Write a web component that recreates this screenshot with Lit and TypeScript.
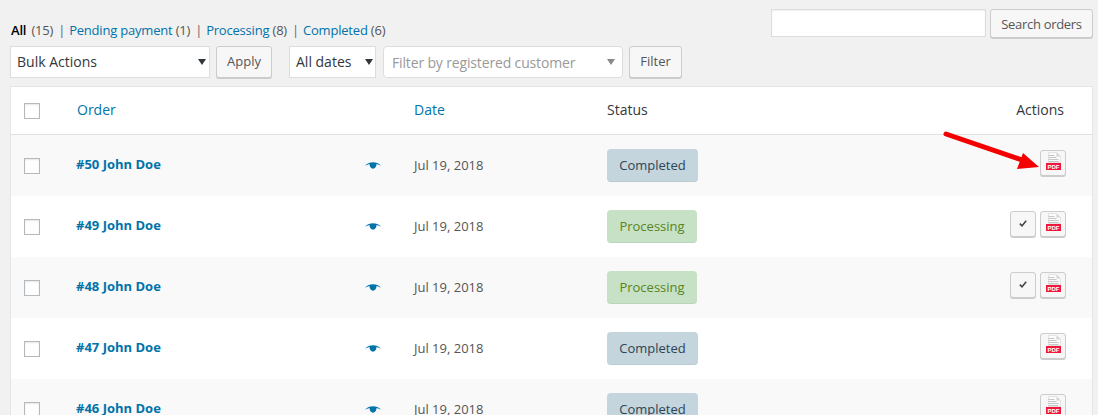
import { LitElement, html, css, svg } from "lit";
import { customElement } from "lit/decorators.js";

type Order = { id: number; status: "Completed" | "Processing" };

const ORDERS: Order[] = [
  { id: 50, status: "Completed" },
  { id: 49, status: "Processing" },
  { id: 48, status: "Processing" },
  { id: 47, status: "Completed" },
  { id: 46, status: "Completed" },
];

const caret = svg`<svg class="caret" width="8" height="6" viewBox="0 0 8 6"><path d="M0 0h8L4 6z" fill="currentColor"/></svg>`;

const eye = html`<svg class="eye" width="16" height="8" viewBox="0 0 16 8">
  <path d="M0 3.8C2.5 1.2 5 .3 8 .3s5.500.9 8 3.500C14.500 3 13 2.400 11.500 2.100 11.600 4.600 10 6.800 8 6.800S4.400 4.600 4.500 2.100C3 2.400 1.500 3 0 3.800z" fill="#0073aa"/>
</svg>`;

const pdf = html`<svg width="20" height="22" viewBox="0 0 20 22">
  <path d="M5.500 .5h8l4 4v6h-12z" fill="#fbfbfb" stroke="#e2e2e2"/>
  <path d="M13.500 .5v4h4z" fill="#d4d4d4"/>
  <path d="M5.500 3.500h6M5.500 5.500h8M5.500 7.500h10M5.500 9.500h10" stroke="#c6c6c6" fill="none"/>
  <rect x="3" y="11" width="15" height="7" fill="#f0163e"/>
  <text x="10.500" y="16.700" text-anchor="middle" class="pdf-text">PDF</text>
</svg>`;

const check = html`<svg width="8" height="7" viewBox="0 0 8 7">
  <path d="M.8 3.600 3 5.800 7.200 .8" fill="none" stroke="#3c434a" stroke-width="1.500"/>
</svg>`;

@customElement("app-root")
export class AppRoot extends LitElement {
  static styles = css`
    :host {
      display: block;
      position: relative;
      height: 415px;
      overflow: hidden;
      background: #f1f1f1;
      color: #555;
      font-family: "Open Sans", sans-serif;
      font-size: 13px;
    }

    a {
      color: #0073aa;
      text-decoration: none;
    }

    .wrap {
      display: flex;
      flex-direction: column;
      padding: 9px 5px 0 10px;
    }

    .search {
      display: flex;
      justify-content: flex-end;
      gap: 4px;
      height: 29px;
    }

    .search-input {
      width: 215px;
      height: 28px;
      box-sizing: border-box;
      background: #fff;
      border: 1px solid #ddd;
      box-shadow: inset 0 1px 2px rgba(0, 0, 0, 0.07);
    }

    .btn {
      box-sizing: border-box;
      display: flex;
      align-items: center;
      justify-content: center;
      height: 32px;
      padding-bottom: 2px;
      background: #f7f7f7;
      border: 1px solid #ccc;
      border-radius: 3px;
      box-shadow: 0 1px 0 #ccc;
      font-size: 13px;
      color: #555;
    }

    .btn.search-btn {
      width: 103px;
      height: 29px;
      padding-bottom: 0;
      letter-spacing: -0.3px;
    }

    .tabs {
      display: flex;
      align-items: center;
      height: 18px;
      margin-top: -17px;
      margin-left: 1px;
      white-space: pre;
      color: #555;
      letter-spacing: -0.2px;
    }

    .tabs b {
      color: #000;
      font-weight: 600;
      margin-right: 2px;
    }

    .tabs .sep {
      color: #666;
      margin: 0 4px 0 5px;
    }

    .filters {
      display: flex;
      align-items: flex-start;
      height: 41px;
      margin-top: 7px;
    }

    .select {
      box-sizing: border-box;
      display: flex;
      align-items: center;
      justify-content: space-between;
      height: 32px;
      background: #fff;
      border: 1px solid #ddd;
      color: #32373c;
      font-size: 14px;
      padding: 0 3px 2px 6px;
    }

    .caret {
      margin-top: 2px;
    }

    .select.bulk {
      width: 200px;
    }

    .select.dates {
      width: 87px;
      margin-left: 17px;
      padding-right: 2px;
    }

    .select.customer {
      width: 240px;
      margin-left: 7px;
      border-radius: 4px;
      color: #999;
      padding: 0 7px 0 8px;
      letter-spacing: -0.15px;
    }

    .select.customer .caret {
      color: #888;
      margin-top: 0;
    }

    .btn.apply {
      width: 56px;
      margin-left: 6px;
    }

    .btn.filter {
      width: 53px;
      margin-left: 6px;
    }

    .table {
      background: #fff;
      border: 1px solid #e5e5e5;
      margin-top: -1px;
    }

    .row {
      display: grid;
      grid-template-columns: 65px 338px 193px 1fr auto;
      align-items: center;
      height: 61px;
      padding-right: 26px;
    }

    .row.head {
      height: 47px;
      border-bottom: 1px solid #e1e1e1;
      padding-right: 28px;
      font-size: 14px;
    }

    .row.head a,
    .row.head span {
      margin-bottom: 2px;
    }

    .row.head a:nth-child(2) {
      margin-left: 1px;
    }

    .head-label {
      color: #32373c;
    }

    .row.alt {
      background: #f9f9f9;
    }

    .box {
      width: 16px;
      height: 16px;
      box-sizing: border-box;
      margin-left: 13px;
      background: #fff;
      border: 1px solid #b4b9be;
      box-shadow: inset 0 1px 2px rgba(0, 0, 0, 0.1);
    }

    .order {
      display: flex;
      align-items: center;
      justify-content: space-between;
      padding-right: 22px;
      font-weight: 700;
      margin-bottom: 4px;
    }

    .eye {
      margin: 4px 11px 0 0;
    }

    .date {
      color: #555;
      margin-bottom: 2px;
    }

    .badge {
      box-sizing: border-box;
      display: inline-flex;
      align-items: center;
      justify-content: center;
      height: 33px;
      border-radius: 4px;
      border-bottom: 1px solid rgba(0, 0, 0, 0.05);
    }

    .badge.Completed {
      width: 91px;
      background: #c4d5dd;
      color: #2e4453;
    }

    .badge.Processing {
      width: 90px;
      background: #c6e1c6;
      color: #5b841b;
    }

    .actions {
      display: flex;
      gap: 4px;
      justify-content: flex-end;
      grid-column: 5;
      margin-bottom: 6px;
    }

    .action {
      box-sizing: border-box;
      display: flex;
      align-items: center;
      justify-content: center;
      width: 26px;
      height: 26px;
      background: #f7f7f7;
      border: 1px solid #ccc;
      border-radius: 3px;
      box-shadow: 0 1px 0 #ccc;
    }

    .pdf-text {
      font-family: "Liberation Sans", sans-serif;
      font-size: 6px;
      font-weight: 700;
      fill: #fff;
    }

    .pointer {
      position: absolute;
      left: 940px;
      top: 128px;
    }
  `;

  render() {
    return html`
      <div class="wrap">
        <div class="search">
          <div class="search-input"></div>
          <div class="btn search-btn">Search orders</div>
        </div>
        <div class="tabs"><b>All</b> (15)<span class="sep">|</span><a>Pending payment</a> (1)<span class="sep">|</span><a>Processing</a> (8)<span class="sep">|</span><a>Completed</a> (6)</div>
        <div class="filters">
          <div class="select bulk">Bulk Actions ${caret}</div>
          <div class="btn apply">Apply</div>
          <div class="select dates">All dates ${caret}</div>
          <div class="select customer">Filter by registered customer ${caret}</div>
          <div class="btn filter">Filter</div>
        </div>
        <div class="table">
          <div class="row head">
            <div class="box"></div>
            <a>Order</a>
            <a>Date</a>
            <span class="head-label">Status</span>
            <span class="actions head-label">Actions</span>
          </div>
          ${ORDERS.map(
            (o, i) => html`
              <div class="row ${i % 2 === 0 ? "alt" : ""}">
                <div class="box"></div>
                <div class="order"><a>#${o.id} John Doe</a>${eye}</div>
                <div class="date">Jul 19, 2018</div>
                <div><span class="badge ${o.status}">${o.status}</span></div>
                <div class="actions">
                  ${o.status === "Processing" ? html`<div class="action">${check}</div>` : ""}
                  <div class="action">${pdf}</div>
                </div>
              </div>
            `
          )}
        </div>
      </div>
      <svg class="pointer" width="105" height="50" viewBox="0 0 105 50">
        <path d="M6 6 85 33" stroke="#f40000" stroke-width="5" stroke-linecap="round" fill="none"/>
        <path d="M99 39 77 41 83 25z" fill="#f40000"/>
      </svg>
    `;
  }
}
